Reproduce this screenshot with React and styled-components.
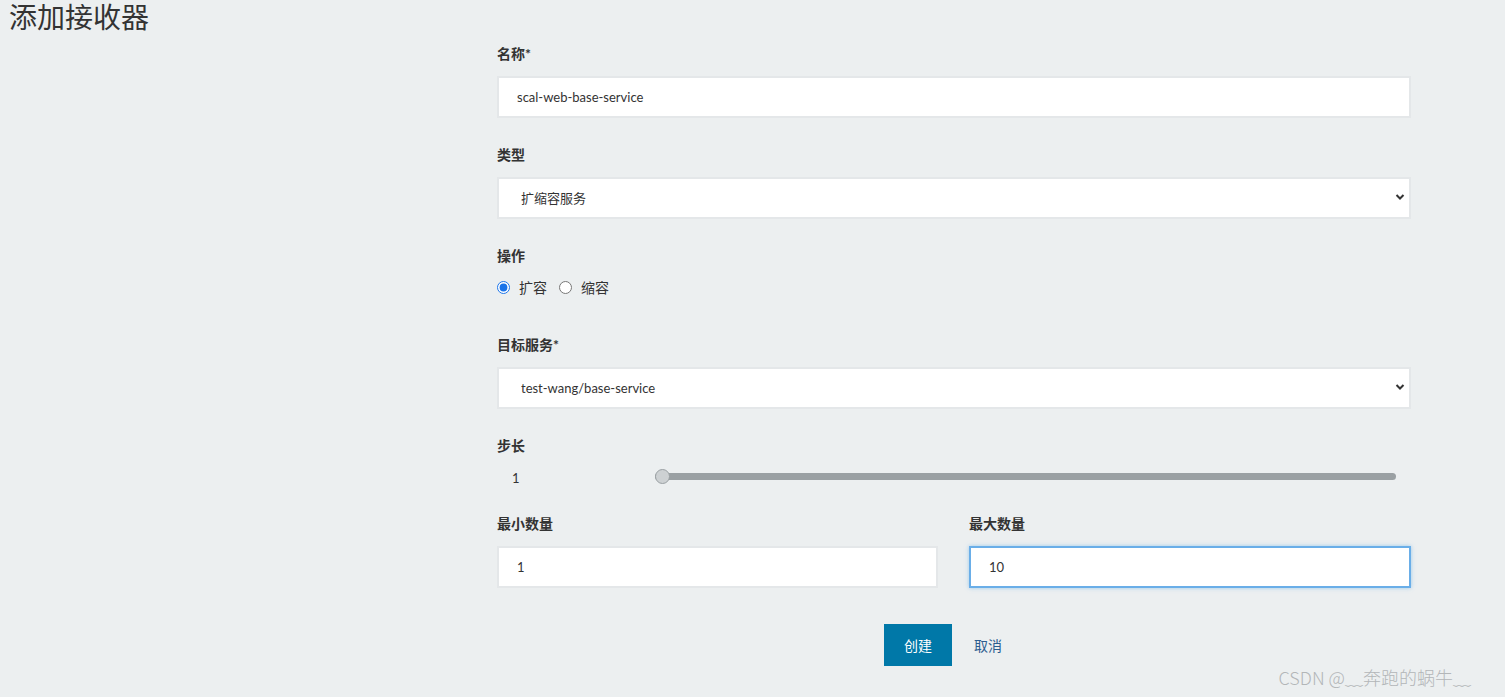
import styled, { createGlobalStyle } from 'styled-components';
import { useState } from 'react';

const GlobalStyle = createGlobalStyle`
  html, body {
    margin: 0;
    padding: 0;
    background: #eceff0;
  }
  body {
    font-family: Lato, "Noto Sans CJK SC", sans-serif;
    color: #333;
  }
`;

const Page = styled.div`
  position: relative;
  min-height: 697px;
  box-sizing: border-box;
`;

const Title = styled.h1`
  margin: 0;
  padding: 0 0 0 9px;
  font-size: 28px;
  font-weight: 400;
  line-height: 34px;
  color: #333;
`;

const Form = styled.form`
  width: 914px;
  margin: 10px 0 0 497px;
`;

const Group = styled.div`
  margin-bottom: ${({ $gap }) => $gap ?? 27}px;
`;

const Label = styled.div`
  font-size: 14px;
  font-weight: 700;
  line-height: 20px;
  margin-bottom: ${({ $mb }) => $mb ?? 12}px;
  color: #333;
`;

const TextInput = styled.input`
  display: block;
  width: 100%;
  height: 42px;
  box-sizing: border-box;
  border: 2px solid ${({ $focused }) => ($focused ? '#6aaee8' : '#e4e7e9')};
  box-shadow: ${({ $focused }) => ($focused ? '0 0 4px rgba(102, 175, 233, 0.6)' : 'none')};
  background: #fff;
  padding: 0 18px;
  font-family: Lato, "Noto Sans CJK SC", sans-serif;
  font-size: 13px;
  color: #333;
  outline: none;
`;

const SelectWrap = styled.div`
  position: relative;
`;

const Select = styled.select`
  display: block;
  width: 100%;
  height: 42px;
  box-sizing: border-box;
  border: 2px solid #e4e7e9;
  background: #fff;
  padding: 0 22px;
  font-family: Lato, "Noto Sans CJK SC", sans-serif;
  font-size: 13px;
  color: #333;
  outline: none;
  appearance: none;
`;

const Chevron = styled.svg`
  position: absolute;
  right: 6px;
  top: 16px;
  pointer-events: none;
`;

const RadioRow = styled.div`
  display: flex;
  align-items: center;
  height: 20px;
  font-size: 14px;
`;

const RadioLabel = styled.label`
  display: flex;
  align-items: center;
  margin-right: 12px;
  input {
    margin: 0 9px 0 0;
    width: 13px;
    height: 13px;
    accent-color: #1a73e8;
  }
`;

const SliderRow = styled.div`
  display: flex;
  align-items: center;
  height: 20px;
`;

const SliderValue = styled.span`
  width: 158px;
  padding-left: 15px;
  margin-top: 4px;
  box-sizing: border-box;
  font-size: 13px;
`;

const Range = styled.input`
  -webkit-appearance: none;
  appearance: none;
  width: 741px;
  height: 14px;
  margin: 0;
  background: transparent;
  &::-webkit-slider-runnable-track {
    height: 7px;
    border-radius: 4px;
    background: #9aa0a3;
  }
  &::-webkit-slider-thumb {
    -webkit-appearance: none;
    width: 15px;
    height: 15px;
    margin-top: -4px;
    border-radius: 50%;
    background: #cdd1d3;
    border: 1px solid #9aa0a3;
    box-sizing: border-box;
  }
`;

const Columns = styled.div`
  display: grid;
  grid-template-columns: 441px 442px;
  column-gap: 31px;
`;

const Actions = styled.div`
  display: flex;
  justify-content: center;
  align-items: center;
  gap: 22px;
  padding-right: 22px;
`;

const PrimaryButton = styled.button`
  width: 68px;
  height: 42px;
  border: none;
  background: #0078a8;
  color: #fff;
  font-family: Lato, "Noto Sans CJK SC", sans-serif;
  font-size: 14px;
  cursor: pointer;
`;

const LinkButton = styled.button`
  border: none;
  background: none;
  padding: 0;
  color: #2c5d8f;
  font-family: Lato, "Noto Sans CJK SC", sans-serif;
  font-size: 14px;
  cursor: pointer;
`;

const Watermark = styled.div`
  position: absolute;
  right: 34px;
  bottom: 7px;
  font-family: "Noto Sans CJK SC", sans-serif;
  font-size: 18px;
  font-weight: 300;
  color: #b3b6b8;
`;

function ChevronIcon() {
  return (
    <Chevron width="10" height="8" viewBox="0 0 10 8">
      <path d="M1.5 2 L5 5.5 L8.5 2" fill="none" stroke="#333" strokeWidth="2" />
    </Chevron>
  );
}

function App() {
  const [op, setOp] = useState('expand');
  const [step, setStep] = useState(1);

  return (
    <Page>
      <GlobalStyle />
      <Title>添加接收器</Title>
      <Form onSubmit={(e) => e.preventDefault()}>
        <Group>
          <Label>名称*</Label>
          <TextInput defaultValue="scal-web-base-service" />
        </Group>
        <Group>
          <Label>类型</Label>
          <SelectWrap>
            <Select defaultValue="scale">
              <option value="scale">扩缩容服务</option>
            </Select>
            <ChevronIcon />
          </SelectWrap>
        </Group>
        <Group $gap={38}>
          <Label $mb={11}>操作</Label>
          <RadioRow>
            <RadioLabel>
              <input type="radio" name="op" checked={op === 'expand'} onChange={() => setOp('expand')} />
              扩容
            </RadioLabel>
            <RadioLabel>
              <input type="radio" name="op" checked={op === 'shrink'} onChange={() => setOp('shrink')} />
              缩容
            </RadioLabel>
          </RadioRow>
        </Group>
        <Group>
          <Label $mb={12}>目标服务*</Label>
          <SelectWrap>
            <Select defaultValue="base">
              <option value="base">test-wang/base-service</option>
            </Select>
            <ChevronIcon />
          </SelectWrap>
        </Group>
        <Group $gap={28}>
          <Label $mb={10}>步长</Label>
          <SliderRow>
            <SliderValue>{step}</SliderValue>
            <Range type="range" min="1" max="10" value={step} onChange={(e) => setStep(e.target.value)} />
          </SliderRow>
        </Group>
        <Group $gap={36}>
          <Columns>
            <div>
              <Label>最小数量</Label>
              <TextInput defaultValue="1" />
            </div>
            <div>
              <Label>最大数量</Label>
              <TextInput defaultValue="10" $focused />
            </div>
          </Columns>
        </Group>
        <Actions>
          <PrimaryButton type="submit">创建</PrimaryButton>
          <LinkButton type="button">取消</LinkButton>
        </Actions>
      </Form>
      <Watermark>CSDN @﹏奔跑的蜗牛﹏</Watermark>
    </Page>
  );
}

export default App;
